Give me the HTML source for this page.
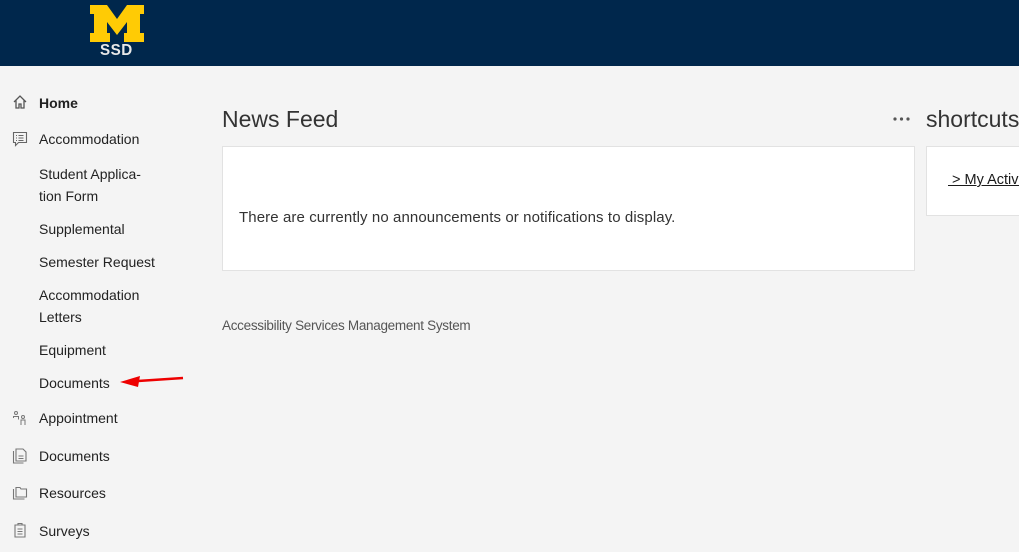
<!DOCTYPE html>
<html><head><style>
*{margin:0;padding:0;box-sizing:border-box}
body{width:1019px;height:552px;overflow:hidden;background:#f4f4f4;font-family:"Liberation Sans",sans-serif;color:#1a1a1a;position:relative}
.hdr{position:absolute;left:0;top:0;width:1019px;height:66px;background:#00274c}
.ssd{position:absolute;left:100px;top:42px;font:bold 16px "Liberation Sans",sans-serif;color:#e8e8e8;transform:scaleX(0.95);transform-origin:left;letter-spacing:0.5px}
.nav{position:absolute;font-size:14px;color:#222}
.ic{position:absolute;left:12px}
h2{position:absolute;left:222px;top:106px;font-weight:normal;font-size:23px;color:#333}
.card{position:absolute;background:#fff;border:1px solid #e2e2e2}
</style></head><body>
<div class="hdr">
<svg style="position:absolute;left:90px;top:5px" width="54" height="37" viewBox="0 0 54 37"><path fill="#ffcb05" d="M0 0h17l10 14L37 0h17v9h-4v19h4v9H34v-9h3V17l-10 13L17 17v11h3v9H0v-9h4V9H0z"/></svg>
<div class="ssd">SSD</div></div>

<svg class="ic" style="top:94px" width="16" height="16" viewBox="0 0 16 16" fill="none" stroke="#555" stroke-width="1.3"><path d="M2 8L8 2l6 6M4 6.5V14h3v-4h2v4h3V6.5"/></svg>
<div class="nav" style="left:39px;top:95px;font-weight:bold">Home</div>
<svg class="ic" style="top:131px" width="16" height="16" viewBox="0 0 16 16" fill="none" stroke="#666" stroke-width="1.1"><path d="M1.5 1.5h13v10h-8l-3 3v-3h-2z M4 4.5h1M6.5 4.5h5M4 7h1M6.5 7h5M4 9.5h1M6.5 9.5h5"/></svg>
<div class="nav" style="left:39px;top:131px">Accommodation</div>
<div class="nav" style="left:39px;top:163px;line-height:22px">Student Applica-<br>tion Form</div>
<div class="nav" style="left:39px;top:221px">Supplemental</div>
<div class="nav" style="left:39px;top:254px">Semester Request</div>
<div class="nav" style="left:39px;top:284px;line-height:22px">Accommodation<br>Letters</div>
<div class="nav" style="left:39px;top:342px">Equipment</div>
<div class="nav" style="left:39px;top:375px">Documents</div>
<svg style="position:absolute;left:118px;top:374px" width="70" height="16"><path d="M20 7L65 4" stroke="#e00" stroke-width="2.5"/><path d="M2 8L22 2L20 13z" fill="#e00"/></svg>
<svg class="ic" style="top:410px" width="16" height="16" viewBox="0 0 16 16" fill="none" stroke="#777" stroke-width="1"><circle cx="4" cy="3" r="1.5"/><path d="M1.5 8V6.5h5v3"/><circle cx="11" cy="7" r="1.5"/><path d="M9 15v-5h4v5"/></svg>
<div class="nav" style="left:39px;top:410px">Appointment</div>
<svg class="ic" style="top:448px" width="16" height="16" viewBox="0 0 16 16" fill="none" stroke="#777" stroke-width="1.1"><path d="M1.5 3v12h10M4 1h7l3 3v9H4z M6.5 8h5M6.5 10.5h5"/></svg>
<div class="nav" style="left:39px;top:448px">Documents</div>
<svg class="ic" style="top:485px" width="16" height="16" viewBox="0 0 16 16" fill="none" stroke="#777" stroke-width="1.1"><path d="M1.5 4v10h11M4 2.5h4l1 1.5h5.5v8H4z"/></svg>
<div class="nav" style="left:39px;top:485px">Resources</div>
<svg class="ic" style="top:522px" width="16" height="16" viewBox="0 0 16 16" fill="none" stroke="#777" stroke-width="1.1"><path d="M3 3h10v12H3z M6 3V1.5h4V3 M5.5 7h5M5.5 9.5h5M5.5 12h5"/></svg>
<div class="nav" style="left:39px;top:523px">Surveys</div>

<h2>News Feed</h2>
<svg style="position:absolute;left:892px;top:116px" width="20" height="6"><circle cx="3" cy="3" r="1.6" fill="#555"/><circle cx="9.5" cy="3" r="1.6" fill="#555"/><circle cx="16" cy="3" r="1.6" fill="#555"/></svg>
<div style="position:absolute;left:926px;top:106px;font-size:23px;color:#333">shortcuts</div>
<div class="card" style="left:222px;top:146px;width:693px;height:125px"></div>
<div style="position:absolute;left:239px;top:209px;font-size:15px;color:#333;letter-spacing:0.1px">There are currently no announcements or notifications to display.</div>
<div class="card" style="left:926px;top:146px;width:100px;height:70px"></div>
<div style="position:absolute;left:948px;top:172px;font-size:14.5px;color:#1a1a1a;text-decoration:underline;white-space:nowrap">&nbsp;&gt; My Activity</div>
<div style="position:absolute;left:222px;top:318px;font-size:13.5px;color:#555;letter-spacing:-0.3px">Accessibility Services Management System</div>
</body></html>
